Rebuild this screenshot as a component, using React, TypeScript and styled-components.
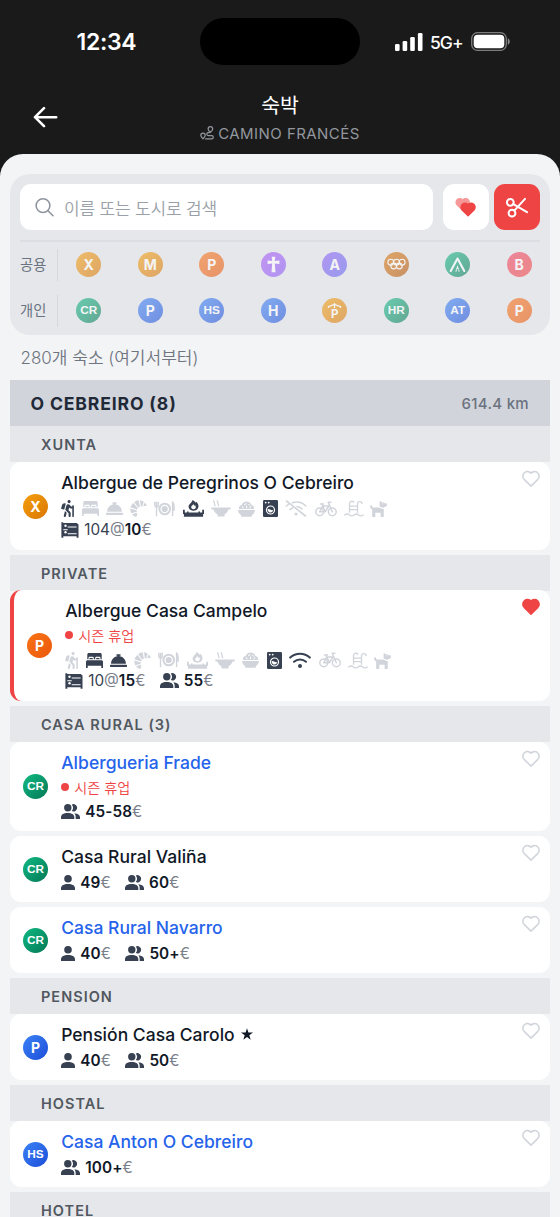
import React from 'react';
import styled, { createGlobalStyle, css } from 'styled-components';
import { FaHiking, FaConciergeBell, FaDog } from 'react-icons/fa';

const GlobalStyle = createGlobalStyle`
  *, *::before, *::after { box-sizing: border-box; }
  html, body { margin: 0; padding: 0; background: #1a1a1a; }
  body {
    width: 560px;
    height: 1217px;
    overflow: hidden;
    font-family: Inter, "Noto Sans CJK KR", sans-serif;
    color: #111827;
  }
  svg { display: block; flex: none; }
`;

const Screen = styled.div`
  display: flex;
  flex-direction: column;
  width: 560px;
  height: 1217px;
  overflow: hidden;
  background: #1a1a1a;
`;

const StatusBar = styled.div`
  display: grid;
  grid-template-columns: 200px 160px 200px;
  align-items: center;
  height: 83px;
  flex: none;
  color: #fff;
`;

const Clock = styled.div`
  padding-left: 76.5px;
  font-size: 23px;
  font-weight: 600;
  letter-spacing: -0.3px;
  line-height: 28px;
`;

const Island = styled.div`
  height: 47px;
  border-radius: 24px;
  background: #000;
`;

const Signals = styled.div`
  display: flex;
  align-items: center;
  padding-left: 35px;
`;

const Network = styled.span`
  width: 32px;
  margin: 1px 9px 0 7px;
  font-size: 17.5px;
  font-weight: 500;
  letter-spacing: -1px;
  white-space: nowrap;
`;

const Header = styled.header`
  display: grid;
  grid-template-columns: 90px 1fr 90px;
  height: 70.5px;
  flex: none;
`;

const BackButton = styled.div`
  padding: 22.5px 0 0 33px;
  color: #fff;
`;

const HeaderTitle = styled.div`
  display: flex;
  flex-direction: column;
  align-items: center;
  padding-top: 9px;
`;

const PageTitle = styled.h1`
  margin: 0;
  font-size: 20.5px;
  font-weight: 400;
  line-height: 28px;
  color: #fff;
`;

const RouteName = styled.div`
  display: flex;
  align-items: center;
  gap: 4px;
  height: 26px;
  font-size: 15px;
  letter-spacing: 0.45px;
  color: #93979e;
  white-space: nowrap;
`;

const Sheet = styled.main`
  flex: 1;
  min-height: 0;
  overflow: hidden;
  padding: 20.5px 10px 0;
  border-radius: 23px 23px 0 0;
  background: #f3f4f6;
`;

const FilterPanel = styled.section`
  height: 161px;
  padding: 10px 0 0 10px;
  border-radius: 20px;
  background: #e5e7eb;
`;

const SearchRow = styled.div`
  display: flex;
  height: 57.5px;
  margin-right: 10px;
  border-bottom: 2px solid #dadde1;
`;

const SearchBox = styled.div`
  display: flex;
  align-items: center;
  gap: 9px;
  width: 413px;
  height: 46px;
  margin-right: 10px;
  padding-left: 14px;
  border-radius: 11px;
  background: #fff;
  color: #9aa0a8;
  font-size: 17px;
  font-weight: 350;
  letter-spacing: -0.18px;
`;

const SquareButton = styled.div<{ $active?: boolean }>`
  display: grid;
  place-items: center;
  width: 46px;
  height: 46px;
  margin-right: 5px;
  border-radius: 11px;
  background: ${(p) => (p.$active ? '#ef4444' : '#fff')};
  color: ${(p) => (p.$active ? '#fff' : '#ef4444')};
  &:last-child { margin-right: 0; }
`;

const FilterRow = styled.div`
  display: grid;
  grid-template-columns: 38px 1fr;
  align-items: center;
  height: 46px;
`;

const FilterLabel = styled.div`
  display: flex;
  align-items: center;
  height: 32px;
  padding-bottom: 2px;
  border-right: 1px solid #d5d8dd;
  font-size: 14.3px;
  color: #6b7280;
`;

const FilterItems = styled.div`
  display: grid;
  grid-template-columns: repeat(8, 1fr);
  justify-items: center;
`;

type Tone = 'amber' | 'orange' | 'purple' | 'violet' | 'bronze' | 'green' | 'rose' | 'blue';

const tones: Record<Tone, string> = {
  amber: '#f59e0b, #d97706',
  orange: '#f97316, #ea580c',
  purple: '#a855f7, #8b5cf6',
  violet: '#8b5cf6, #6366f1',
  bronze: '#d97706, #b45309',
  green: '#10b981, #047857',
  rose: '#f43f5e, #ef4444',
  blue: '#3b82f6, #1d4ed8',
};

const Badge = styled.div<{ $tone: Tone; $faded?: boolean; $small?: boolean }>`
  display: grid;
  place-items: center;
  flex: none;
  width: 25px;
  height: 25px;
  border-radius: 50%;
  background: linear-gradient(135deg, ${(p) => tones[p.$tone]});
  opacity: ${(p) => (p.$faded ? 0.58 : 1)};
  color: #fff;
  font-family: ${(p) => (p.$small ? '"Liberation Sans", sans-serif' : 'Inter, sans-serif')};
  font-weight: ${(p) => (p.$small ? 700 : 650)};
  font-size: ${(p) => (p.$small ? 11.8 : 14)}px;
  line-height: 25px;
`;

const ShelterLetter = styled.div`
  display: flex;
  flex-direction: column;
  align-items: center;
  font-size: 11.5px;
  line-height: 10px;
`;

const ResultCount = styled.div`
  height: 45px;
  padding: 0 10.5px;
  font-size: 17px;
  font-weight: 350;
  line-height: 46px;
  color: #6f757f;
`;

const TownBar = styled.div`
  display: flex;
  align-items: center;
  justify-content: space-between;
  height: 46px;
  padding: 0 21px 0 20.5px;
  background: #d1d5db;
`;

const TownName = styled.h2`
  margin: 0;
  font-size: 17.6px;
  font-weight: 700;
  letter-spacing: 0.85px;
  color: #1f2937;
`;

const Distance = styled.span`
  font-size: 15px;
  font-weight: 500;
  letter-spacing: 0.3px;
  color: #6b7280;
`;

const CategoryBar = styled.h3`
  height: 36px;
  margin: 0;
  padding-left: 31px;
  background: #e5e7eb;
  font-size: 14.5px;
  font-weight: 600;
  line-height: 37px;
  letter-spacing: 1.02px;
  color: #525860;
`;

const Card = styled.article<{ $favorite?: boolean }>`
  display: flex;
  margin-bottom: 5px;
  padding: 0 9px 0 13px;
  border-radius: 11px;
  background: #fff;
  ${(p) =>
    p.$favorite &&
    css`
      margin-top: -1px;
      border-left: 4px solid #ef4444;
    `}
`;

const BadgeSlot = styled.div`
  display: flex;
  align-items: center;
  width: 38.2px;
`;

const Details = styled.div`
  flex: 1;
  padding: 7px 0 10px;
`;

const Name = styled.div<{ $link?: boolean }>`
  display: flex;
  align-items: center;
  gap: 6px;
  height: 26px;
  font-size: 17.5px;
  font-weight: 500;
  letter-spacing: 0.02px;
  white-space: nowrap;
  color: ${(p) => (p.$link ? '#2563eb' : '#111827')};
`;

const Closed = styled.div`
  display: flex;
  align-items: center;
  gap: 5px;
  height: 24px;
  font-size: 14.2px;
  font-weight: 350;
  color: #ef4444;
  &::before {
    content: '';
    width: 8px;
    height: 8px;
    border-radius: 50%;
    background: #ef4444;
  }
`;

const Amenities = styled.div<{ $tight?: boolean }>`
  display: flex;
  align-items: center;
  gap: 7.5px;
  height: ${(p) => (p.$tight ? 24 : 25)}px;
  padding-top: 2px;
`;

const Amenity = styled.span<{ $on: boolean; $w: number }>`
  display: flex;
  justify-content: center;
  width: ${(p) => p.$w}px;
  color: ${(p) => (p.$on ? '#374151' : '#d1d5db')};
`;

const Prices = styled.div<{ $low: boolean; $gap: number }>`
  display: flex;
  align-items: center;
  gap: 14.5px;
  height: 20px;
  padding: ${(p) => (p.$low ? '1px 0 0' : '0 0 1px')};
  margin-top: ${(p) => p.$gap}px;
`;

const Price = styled.div`
  display: flex;
  align-items: center;
  gap: 5px;
  font-size: 15.3px;
  line-height: 19px;
  color: #374151;
  white-space: nowrap;
  b { font-weight: 600; color: #111827; letter-spacing: 0.1px; }
  i { font-style: normal; color: #7a808a; }
`;

const HeartSlot = styled.div`
  padding-top: 8px;
`;

const HEART = 'M19.5 12.6 12 20l-7.5-7.4A5 5 0 1 1 12 6a5 5 0 1 1 7.5 6.6Z';

const Heart = ({ filled }: { filled?: boolean }) => (
  <svg width="20" height="17" viewBox="1.2 2.4 21.6 18.6" fill={filled ? '#ef4444' : 'none'}
    stroke={filled ? '#ef4444' : '#d1d5db'} strokeWidth="1.7" strokeLinejoin="round">
    <path d={HEART} />
  </svg>
);

const DoubleHeart = () => (
  <svg width="24" height="22" viewBox="0 0 24 22" fill="#ef4444">
    <g opacity=".55"><path transform="translate(-.3 -.5) scale(.75)" d={HEART} stroke="#ef4444" strokeWidth="1.6" /></g>
    <path transform="translate(4.6 4) scale(.79)" d={HEART} stroke="#ef4444" strokeWidth="1.8" strokeLinejoin="round" />
  </svg>
);

const SearchIcon = () => (
  <svg width="21" height="21" viewBox="0 0 21 21" fill="none" stroke="#8f959e" strokeWidth="1.6" strokeLinecap="round">
    <circle cx="9" cy="8.6" r="6.900" />
    <path d="m14 13.700 5 5" />
  </svg>
);

const Scissors = () => (
  <svg width="24" height="24" viewBox="0 0 24 24" fill="none" stroke="currentColor" strokeWidth="2" strokeLinecap="round">
    <circle cx="5.3" cy="7.3" r="3.4" />
    <circle cx="7" cy="18.2" r="3.4" />
    <path d="M8.400 9.100 22 17.200M9.300 15.700 20 3.900" />
  </svg>
);

const BackArrow = () => (
  <svg width="25" height="22" viewBox="0 0 25 22" fill="none" stroke="currentColor" strokeWidth="2.6" strokeLinecap="round" strokeLinejoin="round">
    <path d="M11 2.200 2 11.200l9 9M2 11.200h21.200" />
  </svg>
);

const RouteIcon = () => (
  <svg width="14" height="14" viewBox="0 0 14 14" fill="none" stroke="currentColor" strokeWidth="1.2" strokeLinecap="round" strokeLinejoin="round">
    <path d="M3 12.800C1.600 11.300.8 10.400.8 9.300a2.200 2.200 0 0 1 4.400 0C5.200 10.400 4.400 11.300 3 12.800Z" />
    <path d="M10.300 6.400C9 5 8.100 4 8.100 2.900a2.300 2.300 0 0 1 4.600 0c0 1.100-.9 2.100-2.400 3.500Z" />
    <path d="M9.500 6.600H8.300a1.500 1.500 0 0 0 0 3h3.400a1.600 1.600 0 0 1 0 3.200H5.500" />
  </svg>
);

const SignalBars = () => (
  <svg width="28" height="18" viewBox="0 0 28 18" fill="#fff">
    <rect x="0" y="11" width="4.600" height="7" rx="1.300" />
    <rect x="7.600" y="8" width="4.600" height="10" rx="1.300" />
    <rect x="15.200" y="4" width="4.600" height="14" rx="1.300" />
    <rect x="22.900" y="0" width="4.600" height="18" rx="1.300" />
  </svg>
);

const Battery = () => (
  <svg width="40" height="19" viewBox="0 0 40 19">
    <rect x=".7" y=".7" width="34.600" height="17.600" rx="5.800" fill="none" stroke="#7d7d7d" strokeWidth="1.300" />
    <rect x="2.700" y="2.700" width="30.600" height="13.600" rx="4" fill="#fff" />
    <path d="M36.800 6.300c2.600.9 2.600 5.500 0 6.400Z" fill="#8a8a8a" />
  </svg>
);

const Person = () => (
  <svg width="14" height="15" viewBox="0 0 14 15" fill="#374151">
    <circle cx="7" cy="3.800" r="3.800" />
    <path d="M0 15v-1.800C0 10.600 2.600 9 7 9s7 1.600 7 4.200V15Z" />
  </svg>
);

const People = () => (
  <svg width="19" height="15" viewBox="0 0 19 15" fill="#374151">
    <circle cx="6.800" cy="3.800" r="3.700" />
    <path d="M0 15v-1.800C0 10.600 2.500 9 6.700 9s6.600 1.600 6.600 4.200V15Z" />
    <path d="M10.800.5a3.700 3.700 0 1 1 0 6.600 5.400 5.400 0 0 0 0-6.600ZM13.300 9.300c3.600.3 5.700 1.700 5.700 4V15h-4.300v-1.800c0-1.600-.5-2.800-1.400-3.900Z" />
  </svg>
);

const Bed = () => (
  <svg width="17" height="15" viewBox="0 0 17 15" fill="currentColor">
    <path d="M1.300 6.200V1.600C1.300.7 2 0 2.900 0h11.200c.9 0 1.600.7 1.600 1.600v4.600h-1.200V5.100c0-.8-.6-1.300-1.300-1.300h-2.600c-.8 0-1.400.5-1.400 1.300v1.100H7.800V5.100c0-.8-.6-1.300-1.400-1.300H3.800c-.7 0-1.300.5-1.300 1.300v1.100Z" />
    <path d="M3.500 5h3.300v1.200H3.500ZM10.200 5h3.300v1.200h-3.300ZM1.600 7.200h13.800c.9 0 1.600.7 1.600 1.600V15h-1.700v-2.200H1.700V15H0V8.800c0-.9.7-1.600 1.600-1.600Z" />
  </svg>
);

const Croissant = () => (
  <svg width="17" height="17" viewBox="0 0 17 17" fill="currentColor">
    <path d="M4.200 2.300C5.500 1 7 .3 8.700.2l1.200 6.500-1.700.9ZM9.900.3c1.500.1 2.800.6 3.900 1.400l-1.700 4.700-1.200.2ZM14.800 2.500c1 .9 1.700 1.900 2 3.200l-3.700.6ZM3.400 3.100l4.500 5.200-.9 1.300L.5 7.300C.9 5.600 2 4.200 3.400 3.100ZM.3 8.500l6.500 1.900.1 1.400-5.600 1.500C.5 11.800.2 10.200.3 8.500ZM1.900 14.300l5-1.500.3 2.800-1.400 1.300c-1.500-.5-2.900-1.400-3.900-2.600Z" />
  </svg>
);

const Plate = () => (
  <svg width="21" height="16" viewBox="0 0 21 16" fill="none" stroke="currentColor">
    <circle cx="10.700" cy="8" r="5.300" strokeWidth="2" />
    <circle cx="10.700" cy="8" r="3.100" fill="currentColor" stroke="none" />
    <path d="M.8.8v3.800c0 2 3.400 2 3.400 0V.8M2.500.8v14.400M18.600 15V1.200c1.500.8 1.600 4.800 1.500 7.800h-1.500" strokeWidth="1.400" />
  </svg>
);

const Fire = () => (
  <svg width="21" height="17" viewBox="0 0 21 17" fill="currentColor">
    <path fillRule="evenodd" d="M9.600 0c1.700.9 2.400 1.800 2.800 2.800l.9-1.100c1.700 1.700 2.500 3.400 2.100 5.400-.5 2.200-2.400 3.600-4.900 3.600s-4.500-1.400-4.900-3.600C5.200 4.200 8.800 3.100 9.600 0Zm.8 4.200C9 5.600 8.100 6.200 8.200 7.300c.1 1.200 1.100 1.900 2.300 1.900s2.200-.8 2.300-2c0-.8-.2-1.400-.6-2l-.8.900c-.1-.8-.5-1.400-1-1.900Z" />
    <path d="M0 9.700h1.800v2.800H4v-.9h1.600v.9h9.800v-.9H17v.9h2.200V9.700H21v4.200H0ZM.9 13.900h19.200v2.900H.9Z" />
  </svg>
);

const Soup = () => (
  <svg width="20" height="17" viewBox="0 0 20 17">
    <path d="M.3 7.600h19.400v1.700l-2.400.5c-.6 2.200-1.900 3.700-3.800 4.600v2h-7v-2c-1.900-.9-3.200-2.400-3.800-4.600l-2.400-.5Z" fill="currentColor" />
    <path d="M2.200.6c2.200 1.700.2 3.200 2.200 5.600M5.800.6c2.200 1.700.2 3.200 2.200 5.600" fill="none" stroke="currentColor" strokeWidth="1.300" />
  </svg>
);

const RiceBowl = () => (
  <svg width="17" height="16" viewBox="0 0 17 16">
    <path d="M0 9h17c-.2 2.500-1.500 4.200-3.200 5.200v1.500H3.200v-1.500C1.500 13.200.2 11.500 0 9Z" fill="currentColor" />
    <path d="M.9 8C.7 5.600 2 4.200 3.700 4c.6-2 2.500-3.500 4.900-3.500s4.200 1.500 4.800 3.500c1.600.2 2.900 1.600 2.700 4Z" fill="currentColor" />
    <path d="m4.300 5.500 1 1.600M6.500 3.400l1.600-.5M8.500 5l.2 1.800M10.700 3.300l.9 1M12.700 5.600l-.8 1.500" stroke="#fff" strokeWidth="1" strokeLinecap="round" />
  </svg>
);

const Washer = () => (
  <svg width="15" height="17" viewBox="0 0 15 17">
    <rect width="15" height="17" rx="1.200" fill="currentColor" />
    <circle cx="2.700" cy="2.600" r=".9" fill="#fff" />
    <circle cx="5.700" cy="2.600" r=".9" fill="#fff" />
    <circle cx="7.500" cy="10" r="4" fill="none" stroke="#fff" strokeWidth="1.200" />
    <path d="M4.700 9.200c1.700-.6 2.800 1.300 5.400.9-.3 1.700-1.200 2.500-2.600 2.500s-2.800-1.200-2.800-3.400Z" fill="#fff" />
  </svg>
);

const Wifi = ({ off }: { off?: boolean }) => (
  <svg width="22" height="17" viewBox="0 0 22 17" fill="none" stroke="currentColor" strokeWidth={off ? 1.5 : 2} strokeLinecap="round">
    <path d={off ? 'M7.500 2.800C12 1.300 17.300 2.600 20.800 6M1.300 6l2.400-1.800M5 9.500l2.600-1.500M12 6.500c2 .3 3.600 1.100 5 2.500' : 'M1.200 5.600c5.500-5.200 14.100-5.200 19.600 0M5 9.800c3.400-3.200 8.600-3.200 12 0'} />
    <circle cx="11" cy="14" r={off ? 1.5 : 2} fill="currentColor" stroke="none" />
    {off && <path d="M1.500 1 20.500 16" strokeWidth="1.600" />}
  </svg>
);

const Bike = () => (
  <svg width="22" height="16" viewBox="0 0 22 16" fill="none" stroke="currentColor" strokeWidth="1.500" strokeLinecap="round" strokeLinejoin="round">
    <circle cx="4.700" cy="10.800" r="3.900" />
    <circle cx="17.300" cy="10.800" r="3.900" />
    <path d="M4.700 10.800 7.600 5h6.200l-3.500 5.800H4.700M10.300 10.800 7 2.900M5.500 2.900h3M17.300 10.800 13.200 1.200h2.600" />
  </svg>
);

const Pool = () => (
  <svg width="20" height="17" viewBox="0 0 20 17" fill="none" stroke="currentColor" strokeWidth="1.300" strokeLinecap="round">
    <path d="M5.500 12.300V3.500a2.400 2.400 0 0 1 4.300-1.300M13.500 12.300V3.500a2.400 2.400 0 0 1 4.700 0M5.500 6.200h8M5.500 9.600h8M.8 15c1.500-1.300 3-1.300 4.600 0 1.500 1.200 3 1.200 4.600 0 1.500-1.300 3-1.300 4.600 0 1.500 1.200 3 1.200 4.600 0" />
  </svg>
);

const BunkBed = () => (
  <svg width="18" height="16" viewBox="0 0 18 16">
    <path d="M.4.300h1.800V1h13.500l1.800 1.500V15.700h-1.900v-1.400H2.300v1.400H.4Z" fill="#374151" />
    <g fill="#fff">
      <circle cx="4.500" cy="3.700" r="1.200" />
      <circle cx="4.500" cy="10.300" r="1.200" />
      <path d="M6.700 4.600h8.900v1H6.700ZM2.300 7.300h4.400v.9H2.300ZM6.700 11.200h8.900v1H6.700Z" />
    </g>
  </svg>
);

const Rings = () => (
  <svg width="19" height="13" viewBox="0 0 19 13" fill="none" stroke="#fff" strokeWidth="1.1">
    <circle cx="3.800" cy="4.200" r="2.900" />
    <circle cx="9.500" cy="4.200" r="2.900" />
    <circle cx="15.200" cy="4.200" r="2.900" />
    <circle cx="6.700" cy="8" r="2.900" />
    <circle cx="12.300" cy="8" r="2.900" />
  </svg>
);

const Cross = () => (
  <svg width="13" height="17" viewBox="0 0 13 17" fill="#fff">
    <path d="M4.700.8h3.600l-.5 4.200 4.600-.5v3.500l-4.600-.5.700 8.800h-4l.7-8.800L.6 8V4.500l4.600.5Z" />
  </svg>
);

const Tent = () => (
  <svg width="17" height="17" viewBox="0 0 17 17" fill="none" stroke="#fff" strokeLinecap="round" strokeLinejoin="round">
    <path d="M1.700 15 8.500 2.500 15.300 15" strokeWidth="2.100" />
    <path d="M8.500 9.300 6.300 15.500h1.400v-2.600h1.600v2.600h1.400Z" fill="#fff" stroke="none" />
  </svg>
);

const Roof = () => (
  <svg width="15" height="6" viewBox="0 0 15 6" fill="none" stroke="#fff" strokeWidth="1.300">
    <path d="M1.500 5V3.600L7.500 1.500l6 2.100V5M7.500 0v5" />
  </svg>
);

const amenityList: { key: string; width: number; icon: React.ReactNode; off?: React.ReactNode }[] = [
  { key: 'hiking', width: 13, icon: <FaHiking size={17} /> },
  { key: 'bed', width: 17, icon: <Bed /> },
  { key: 'reception', width: 16.5, icon: <FaConciergeBell size={17} /> },
  { key: 'breakfast', width: 16, icon: <Croissant /> },
  { key: 'meals', width: 22, icon: <Plate /> },
  { key: 'fire', width: 21, icon: <Fire /> },
  { key: 'soup', width: 19, icon: <Soup /> },
  { key: 'rice', width: 17, icon: <RiceBowl /> },
  { key: 'washer', width: 15, icon: <Washer /> },
  { key: 'wifi', width: 22, icon: <Wifi />, off: <Wifi off /> },
  { key: 'bike', width: 22, icon: <Bike /> },
  { key: 'pool', width: 19, icon: <Pool /> },
  { key: 'dog', width: 16, icon: <FaDog size={19} /> },
];

interface Kind { tone: Tone; label: React.ReactNode }

const publicKinds: Kind[] = [
  { tone: 'amber', label: 'X' },
  { tone: 'amber', label: 'M' },
  { tone: 'orange', label: 'P' },
  { tone: 'purple', label: <Cross /> },
  { tone: 'violet', label: 'A' },
  { tone: 'bronze', label: <Rings /> },
  { tone: 'green', label: <Tent /> },
  { tone: 'rose', label: 'B' },
];

const privateKinds: Kind[] = [
  { tone: 'green', label: 'CR' },
  { tone: 'blue', label: 'P' },
  { tone: 'blue', label: 'HS' },
  { tone: 'blue', label: 'H' },
  { tone: 'amber', label: <ShelterLetter><Roof />P</ShelterLetter> },
  { tone: 'green', label: 'HR' },
  { tone: 'blue', label: 'AT' },
  { tone: 'orange', label: 'P' },
];

const isSmall = (label: React.ReactNode) => typeof label === 'string' && label.length > 1;

const KindFilter = ({ title, kinds }: { title: string; kinds: Kind[] }) => (
  <FilterRow>
    <FilterLabel>{title}</FilterLabel>
    <FilterItems>
      {kinds.map((k, i) => (
        <Badge key={i} $tone={k.tone} $small={isSmall(k.label)} $faded>{k.label}</Badge>
      ))}
    </FilterItems>
  </FilterRow>
);

interface Lodging {
  name: string;
  kind: Kind;
  link?: boolean;
  star?: boolean;
  favorite?: boolean;
  closed?: boolean;
  amenities?: string[];
  dorm?: [string, string];
  single?: string;
  double?: string;
}

const LodgingCard = ({ item }: { item: Lodging }) => (
  <Card $favorite={item.favorite}>
    <BadgeSlot>
      <Badge $tone={item.kind.tone} $small={isSmall(item.kind.label)}>{item.kind.label}</Badge>
    </BadgeSlot>
    <Details>
      <Name $link={item.link}>
        {item.name}
        {item.star && (
          <svg width="12" height="12" viewBox="0 0 12 12" fill="#111827">
            <path d="m6 .3 1.400 4.300H12L8.300 7.300l1.400 4.500L6 9.100l-3.700 2.700 1.400-4.500L0 4.600h4.600Z" />
          </svg>
        )}
      </Name>
      {item.closed && <Closed>시즌 휴업</Closed>}
      {item.amenities && (
        <Amenities $tight={item.closed}>
          {amenityList.map((a) => {
            const on = item.amenities!.includes(a.key);
            return <Amenity key={a.key} $on={on} $w={a.width}>{on ? a.icon : a.off ?? a.icon}</Amenity>;
          })}
        </Amenities>
      )}
      <Prices $low={!item.amenities} $gap={item.amenities ? 0 : item.closed ? 2 : 3}>
        {item.dorm && <Price><BunkBed /><span>{item.dorm[0]}<i>@</i><b>{item.dorm[1]}</b><i>€</i></span></Price>}
        {item.single && <Price><Person /><span><b>{item.single}</b><i>€</i></span></Price>}
        {item.double && <Price><People /><span><b>{item.double}</b><i>€</i></span></Price>}
      </Prices>
    </Details>
    <HeartSlot><Heart filled={item.favorite} /></HeartSlot>
  </Card>
);

const cr: Kind = { tone: 'green', label: 'CR' };

const groups: { title: string; items: Lodging[] }[] = [
  {
    title: 'XUNTA',
    items: [{ name: 'Albergue de Peregrinos O Cebreiro', kind: { tone: 'amber', label: 'X' }, amenities: ['hiking', 'fire', 'washer'], dorm: ['104', '10'] }],
  },
  {
    title: 'PRIVATE',
    items: [{ name: 'Albergue Casa Campelo', kind: { tone: 'orange', label: 'P' }, favorite: true, closed: true, amenities: ['bed', 'reception', 'washer', 'wifi'], dorm: ['10', '15'], double: '55' }],
  },
  {
    title: 'CASA RURAL (3)',
    items: [
      { name: 'Albergueria Frade', kind: cr, link: true, closed: true, double: '45-58' },
      { name: 'Casa Rural Valiña', kind: cr, single: '49', double: '60' },
      { name: 'Casa Rural Navarro', kind: cr, link: true, single: '40', double: '50+' },
    ],
  },
  {
    title: 'PENSION',
    items: [{ name: 'Pensión Casa Carolo', kind: { tone: 'blue', label: 'P' }, star: true, single: '40', double: '50' }],
  },
  {
    title: 'HOSTAL',
    items: [{ name: 'Casa Anton O Cebreiro', kind: { tone: 'blue', label: 'HS' }, link: true, double: '100+' }],
  },
  { title: 'HOTEL', items: [] },
];

export default function App() {
  return (
    <Screen>
      <GlobalStyle />
      <StatusBar>
        <Clock>12:34</Clock>
        <Island />
        <Signals>
          <SignalBars />
          <Network>5G+</Network>
          <Battery />
        </Signals>
      </StatusBar>
      <Header>
        <BackButton><BackArrow /></BackButton>
        <HeaderTitle>
          <PageTitle>숙박</PageTitle>
          <RouteName><RouteIcon />CAMINO FRANCÉS</RouteName>
        </HeaderTitle>
      </Header>
      <Sheet>
        <FilterPanel>
          <SearchRow>
            <SearchBox><SearchIcon />이름 또는 도시로 검색</SearchBox>
            <SquareButton><DoubleHeart /></SquareButton>
            <SquareButton $active><Scissors /></SquareButton>
          </SearchRow>
          <KindFilter title="공용" kinds={publicKinds} />
          <KindFilter title="개인" kinds={privateKinds} />
        </FilterPanel>
        <ResultCount>280개 숙소 (여기서부터)</ResultCount>
        <TownBar>
          <TownName>O CEBREIRO (8)</TownName>
          <Distance>614.4 km</Distance>
        </TownBar>
        {groups.map((g) => (
          <section key={g.title}>
            <CategoryBar>{g.title}</CategoryBar>
            {g.items.map((item) => <LodgingCard key={item.name} item={item} />)}
          </section>
        ))}
      </Sheet>
    </Screen>
  );
}
